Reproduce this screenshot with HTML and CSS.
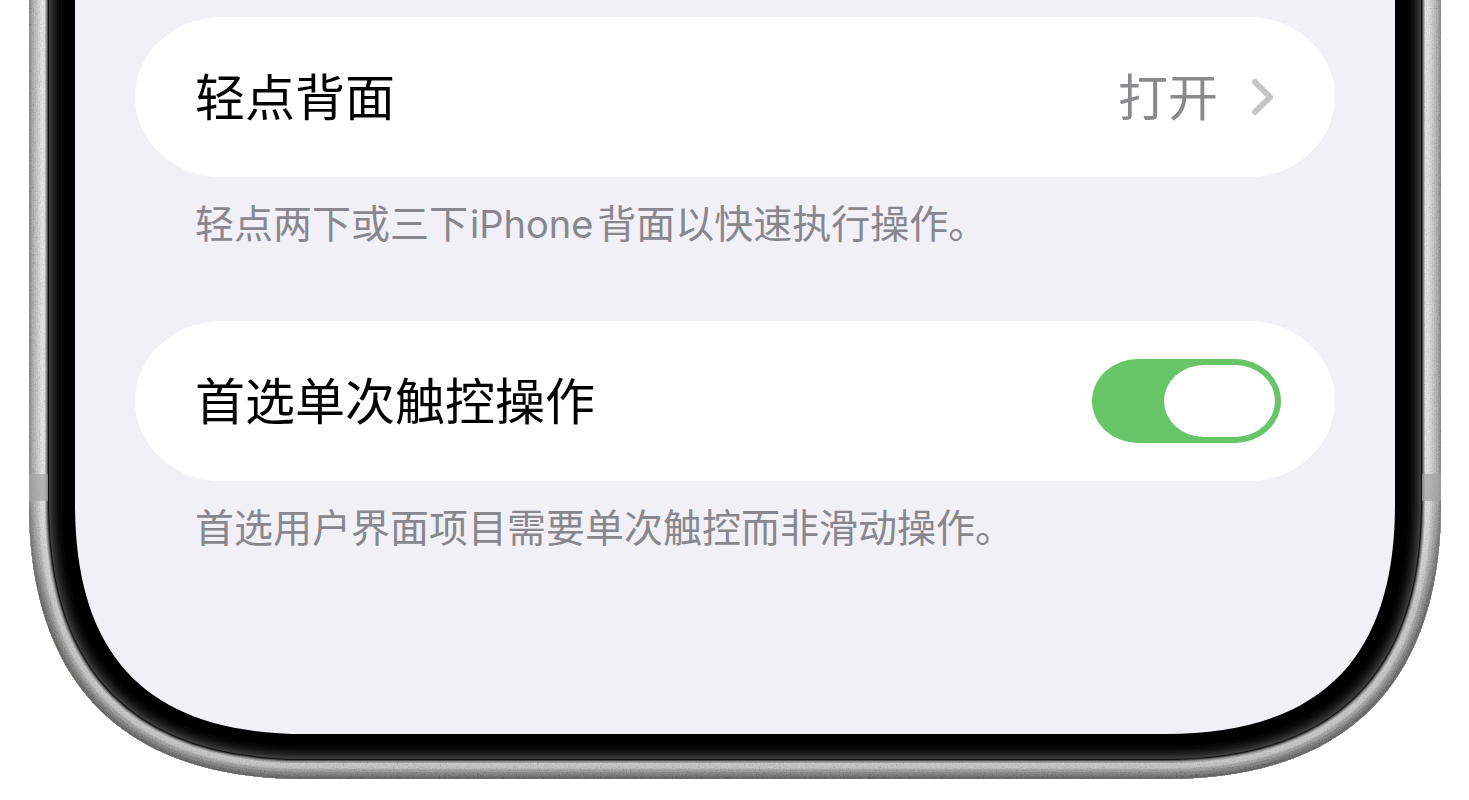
FILE: index.html
```html
<!DOCTYPE html>
<html lang="zh-CN">
<head>
<meta charset="UTF-8">
<meta name="viewport" content="width=device-width, initial-scale=1">
<title>触控</title>
<link rel="stylesheet" href="styles.css">
</head>
<body>
<main class="phone">
  <svg class="frame" viewBox="0 0 1412 779" preserveAspectRatio="none" aria-hidden="true">
    <defs>
      <path id="body" d="M0,-60 V503 C0,684 95,779 276,779 H1136 C1317,779 1412,684 1412,503 V-60 Z"/>
      <clipPath id="bodyClip"><use href="#body"/></clipPath>
      <linearGradient id="shade" gradientUnits="userSpaceOnUse" x1="0" y1="480" x2="0" y2="779">
        <stop offset="0" stop-color="#333330" stop-opacity="0"/>
        <stop offset="0.4" stop-color="#333330" stop-opacity="0.15"/>
        <stop offset="1" stop-color="#333330" stop-opacity="0.17"/>
      </linearGradient>
      <filter id="grain" x="0" y="0" width="100%" height="100%">
        <feTurbulence type="fractalNoise" baseFrequency="0.7" numOctaves="2" seed="4"/>
        <feColorMatrix type="matrix" values="1.6 0 0 0 -0.3  1.6 0 0 0 -0.3  1.6 0 0 0 -0.3  0 0 0 0 0.14"/>
        <feComposite in2="SourceGraphic" operator="in"/>
      </filter>
    </defs>
    <g clip-path="url(#bodyClip)" fill="none">
      <use href="#body" fill="#000"/>
      <!-- glass edge, fading into the bezel -->
      <use href="#body" stroke="#060606" stroke-width="66"/>
      <use href="#body" stroke="#0d0d0d" stroke-width="60"/>
      <use href="#body" stroke="#161616" stroke-width="56"/>
      <use href="#body" stroke="#202020" stroke-width="52"/>
      <use href="#body" stroke="#2b2b2b" stroke-width="48"/>
      <use href="#body" stroke="#3a3a3a" stroke-width="44"/>
      <use href="#body" stroke="#111111" stroke-width="40"/>
      <use href="#body" stroke="#505050" stroke-width="38"/>
      <!-- metal band -->
      <use href="#body" stroke="#858585" stroke-width="36"/>
      <use href="#body" stroke="#b5b5b4" stroke-width="34"/>
      <use href="#body" stroke="#e2e2e1" stroke-width="32"/>
      <use href="#body" stroke="#dededd" stroke-width="26"/>
      <use href="#body" stroke="#d2d2d1" stroke-width="22"/>
      <use href="#body" stroke="#c5c5c4" stroke-width="18"/>
      <use href="#body" stroke="#b7b7b5" stroke-width="14"/>
      <use href="#body" stroke="#a9a9a7" stroke-width="10"/>
      <use href="#body" stroke="#989896" stroke-width="6"/>
      <use href="#body" stroke="#838381" stroke-width="3"/>
      <use href="#body" stroke="url(#shade)" stroke-width="34"/>
      <use href="#body" stroke="url(#shade)" stroke-width="20"/>
      <use href="#body" stroke="url(#shade)" stroke-width="14"/>
      <use href="#body" stroke="url(#shade)" stroke-width="8"/>
      <use href="#body" stroke="#000" stroke-width="34" filter="url(#grain)"/>
      <!-- antenna lines -->
      <path d="M0 474H19V501H0ZM1393 474H1412V501H1393Z" fill="#a2a2a1" fill-opacity="0.7"/>
    </g>
    <path fill="#f1f0f6" d="M46,-60 V504 C46,659 121,734 276,734 H1136 C1291,734 1366,659 1366,504 V-60 Z"/>
  </svg>

  <div class="screen">
    <section class="group">
      <button class="card" type="button" aria-describedby="backTapNote">
        <span class="label">轻点背面</span>
        <span class="value">打开</span>
        <svg class="chevron" viewBox="0 0 22 38" aria-hidden="true"><path d="M3 4L18 19L3 34"/></svg>
      </button>
      <p class="note" id="backTapNote">轻点两下或三下<span class="latin">iPhone</span>背面以快速执行操作。</p>
    </section>

    <section class="group">
      <div class="card">
        <label class="label" for="singleTouch">首选单次触控操作</label>
        <input class="switch" id="singleTouch" type="checkbox" role="switch" aria-describedby="singleTouchNote" checked>
      </div>
      <p class="note" id="singleTouchNote">首选用户界面项目需要单次触控而非滑动操作。</p>
    </section>
  </div>
</main>
</body>
</html>
```
FILE: styles.css
```css
* { box-sizing: border-box; }
body { margin: 0; background: #fff; font-family: Inter, "Noto Sans CJK SC", sans-serif; color: #000; }

.phone { position: relative; margin: 0 28px 0 29px; padding: 0 46px 45px; }
.frame { position: absolute; inset: 0; width: 100%; height: 100%; }

.screen { position: relative; padding: 17px 60px 109px; }
.group { margin-bottom: 68px; }

.card { display: flex; align-items: center; width: 100%; min-height: 160px; margin: 0; padding: 0 54px 0 60px; border: 0; border-radius: 86px / 80px; background: #fff; color: #000; font: inherit; text-align: left; }
.label, .value { padding-top: 2px; font-size: 50px; line-height: 72px; }
.label { flex: 1; }
.value { color: #8a8a8d; }
.chevron { width: 22px; height: 38px; margin: 0 7px 0 34px; fill: none; stroke: #c5c5c7; stroke-width: 6; stroke-linecap: round; stroke-linejoin: round; }

.note { margin: 0; padding: 18px 60px 0; font-size: 39px; line-height: 58px; color: #88878d; }
.latin { margin: 0 4px 0 2px; font-size: 38px; }

/* switch */
.switch { appearance: none; display: flex; width: 189px; height: 84px; margin: 0; padding: 6px; border-radius: 46px / 42px; background: #c7c7cc; }
.switch::before { content: ""; width: 111px; height: 72px; border-radius: 40px / 36px; background: #fff; }
.switch:checked { justify-content: flex-end; background: #67c568; }
```
